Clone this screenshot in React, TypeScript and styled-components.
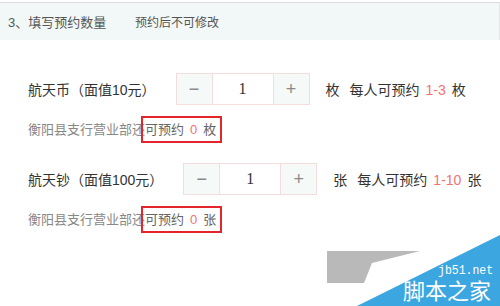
import styled, { createGlobalStyle } from 'styled-components';

interface Coin {
    name: string;
    unit: string;
    value: number;
    range: string;
    left: number;
}

const coins: Coin[] = [
    {name: '航天币（面值10元）', unit: '枚', value: 1, range: '1-3', left: 0},
    {name: '航天钞（面值100元）', unit: '张', value: 1, range: '1-10', left: 0},
];

export default function App(): JSX.Element {
    return (
        <Page>
            <GlobalStyle/>
            <Header>
                <Title>3、填写预约数量</Title>
                <Hint>预约后不可修改</Hint>
            </Header>
            <Section>
                {coins.map((coin) => (
                    <Item key={coin.name}>
                        <Row>
                            <Label>{coin.name}</Label>
                            <Stepper>
                                <StepButton>−</StepButton>
                                <StepValue>{coin.value}</StepValue>
                                <StepButton $right>+</StepButton>
                            </Stepper>
                            <Unit>{coin.unit}</Unit>
                            <Limit>
                                每人可预约<Red>{coin.range}</Red>{coin.unit}
                            </Limit>
                        </Row>
                        <Note>
                            衡阳县支行营业部还
                            <Marked>
                                可预约<Red>{coin.left}</Red>{coin.unit}
                            </Marked>
                        </Note>
                    </Item>
                ))}
            </Section>
            <Watermark width="200" height="76" viewBox="0 0 200 76">
                <polygon points="27,21 120,21 72,33 64,53 27,53" fill="#b9b9b9"/>
                <polygon points="57,76 200,5 200,76" fill="#3ba6df"/>
                <text x="138" y="44" fill="#fff" fontSize="12" textLength="55" lengthAdjust="spacingAndGlyphs"
                      fontFamily="'Liberation Mono', monospace">jb51.net</text>
                <text x="103" y="69" fill="#fff" fontSize="22" fontFamily="'Noto Sans CJK SC', sans-serif">脚本之家</text>
            </Watermark>
        </Page>
    );
}

const GlobalStyle = createGlobalStyle`
  body {
    margin: 0;
    background: #fff;
    font-family: "Liberation Sans", "Noto Sans CJK SC", sans-serif;
  }
`;

const Page = styled.div`
  position: relative;
  width: 500px;
  height: 306px;
  overflow: hidden;
  padding-top: 2px;
  box-sizing: border-box;
`;

const Header = styled.div`
  display: flex;
  align-items: center;
  height: 37px;
  padding-left: 8px;
  background: #f1f8f7;
  border-top: 1px solid #dcdcdc;
  border-right: 1px solid #e6e6e6;
  color: #555;
`;

const Title = styled.span`
  font-size: 13px;
  width: 127px;
`;

const Hint = styled.span`
  font-size: 12px;
`;

const Section = styled.div`
  display: flex;
  flex-direction: column;
  gap: 23px;
  padding: 33px 0 0 28px;
`;

const Item = styled.div`
  display: flex;
  flex-direction: column;
  gap: 15px;
`;

const Row = styled.div`
  display: flex;
  align-items: center;
  height: 32px;
  font-size: 14px;
  color: #333;
`;

const Label = styled.span`
  margin-right: 20px;
`;

const Stepper = styled.div`
  display: flex;
  height: 100%;
  border: 1px solid #f2dcdc;
  box-sizing: border-box;
`;

const StepButton = styled.div<{ $right?: boolean }>`
  width: 35px;
  display: flex;
  align-items: center;
  justify-content: center;
  background: #f5f9f8;
  color: #8a8a8a;
  font-size: 18px;
  font-weight: 300;
  border-left: ${(p) => (p.$right ? '1px solid #f2dcdc' : 'none')};
  border-right: ${(p) => (p.$right ? 'none' : '1px solid #f2dcdc')};
`;

const StepValue = styled.div`
  width: 60px;
  display: flex;
  align-items: center;
  justify-content: center;
  font-family: "Liberation Serif", serif;
  font-size: 16px;
  color: #333;
`;

const Unit = styled.span`
  margin-left: 16px;
`;

const Limit = styled.span`
  margin-left: 10px;
`;

const Red = styled.span`
  color: #f07373;
  margin: 0 6px;
`;

const Note = styled.div`
  font-size: 13px;
  line-height: 20px;
  color: #888;
`;

const Marked = styled.span`
  position: relative;
  color: #666;

  &::after {
    content: '';
    position: absolute;
    left: -4px;
    right: -6px;
    top: -6px;
    bottom: -6px;
    border: 2px solid #e4262a;
  }
`;

const Watermark = styled.svg`
  position: absolute;
  left: 300px;
  top: 230px;
`;
